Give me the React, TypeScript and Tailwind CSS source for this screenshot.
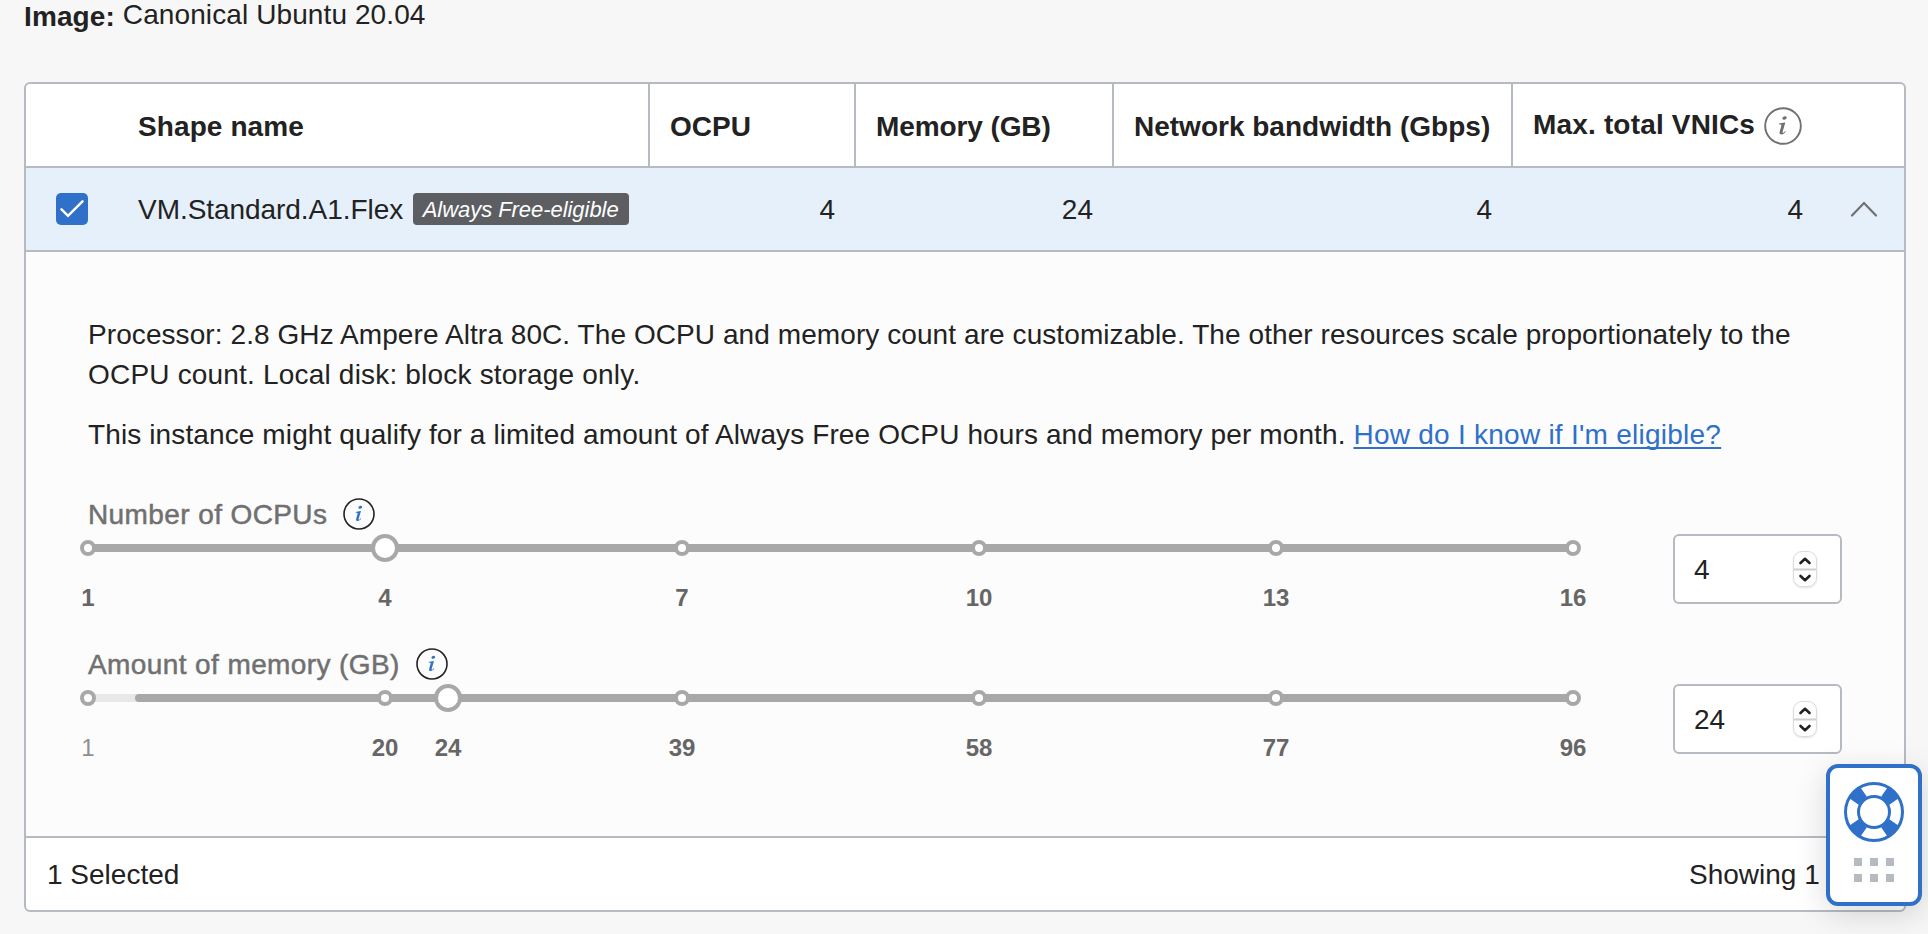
import React from "react";

const FONT = "font-['Liberation_Sans',Arial,sans-serif]";

function InfoIcon({ size, ring, ink }: { size: number; ring: string; ink: string }) {
  return (
    <svg width={size} height={size} viewBox="0 0 32 32" fill="none" className="block shrink-0">
      <circle cx="16" cy="16" r="15" stroke={ring} strokeWidth="1.6" />
      <ellipse cx="17.300" cy="9.300" rx="1.900" ry="1.400" fill={ink} transform="rotate(-20 17.300 9.300)" />
      <path
        d="M12.600 13.900c1.600-.1 3.300-.4 4.900-.8l.4.2-2.200 7.500c-.2.7 0 .9.300.9.500 0 1.200-.7 1.800-1.500l.5.400c-1 1.600-2.300 2.500-3.600 2.500-1.300 0-1.900-.9-1.500-2.300l1.400-5.100c.2-.8 0-1-2-1.200z"
        fill={ink}
      />
    </svg>
  );
}

type Stop = { label: string; at: number; big?: boolean; light?: boolean };

function Slider({ stops, start }: { stops: Stop[]; start: number }) {
  return (
    <div className="mt-[2px] w-[1485px]">
      <div className="relative h-[28px]">
        <div className="absolute inset-x-0 top-[10px] h-[8px] rounded-full bg-[#e8e8e8]" />
        <div className="absolute right-0 top-[10px] h-[8px] rounded-full bg-[#a8a8a8]" style={{ left: `${start}px` }} />
        {stops.map((s) => (
          <span
            key={s.label}
            className={
              s.big
                ? "absolute top-0 size-[28px] -translate-x-1/2 rounded-full border-4 border-[#a8a8a8] bg-white"
                : "absolute top-[6px] size-[16px] -translate-x-1/2 rounded-full border-4 border-[#a8a8a8] bg-white"
            }
            style={{ left: `${s.at}px` }}
          />
        ))}
      </div>
      <div className="relative mt-[21px] h-[30px] text-[24px] leading-[30px]">
        {stops.map((s) => (
          <span
            key={s.label}
            className={
              s.light
                ? "absolute -translate-x-1/2 text-[#8f8f8f]"
                : "absolute -translate-x-1/2 font-bold text-[#666]"
            }
            style={{ left: `${s.at}px` }}
          >
            {s.label}
          </span>
        ))}
      </div>
    </div>
  );
}

function NumberBox({ value }: { value: string }) {
  return (
    <div className="flex h-[70px] w-[169px] items-center justify-between rounded-[6px] border-2 border-[#b6bbc2] bg-white pl-[19px] pr-[23px] text-[28px]">
      <span className="pt-[2px]">{value}</span>
      <span className="-mt-px flex h-[36px] w-[24px] flex-col items-center rounded-[9px] border border-[#dcdcdc] shadow-[0_1px_2px_rgba(0,0,0,0.12)]">
        <svg width="22" height="34" viewBox="0 0 22 34" fill="none">
          <path d="M6.500 11 11 6.800l4.500 4.200" stroke="#222" strokeWidth="2.600" strokeLinecap="round" strokeLinejoin="round" />
          <path d="M0 17.500h22" stroke="#cfcfcf" strokeWidth="2" />
          <path d="M6.500 24 11 28.200l4.500-4.200" stroke="#222" strokeWidth="2.600" strokeLinecap="round" strokeLinejoin="round" />
        </svg>
      </span>
    </div>
  );
}

const ocpuStops: Stop[] = [
  { label: "1", at: 0 },
  { label: "4", at: 297, big: true },
  { label: "7", at: 594 },
  { label: "10", at: 891 },
  { label: "13", at: 1188 },
  { label: "16", at: 1485 },
];

const memoryStops: Stop[] = [
  { label: "1", at: 0, light: true },
  { label: "20", at: 297 },
  { label: "24", at: 360, big: true },
  { label: "39", at: 594 },
  { label: "58", at: 891 },
  { label: "77", at: 1188 },
  { label: "96", at: 1485 },
];

function Field({ label, value, stops, start }: { label: string; value: string; stops: Stop[]; start: number }) {
  return (
    <div className="flex h-[150px]">
      <div className="w-[1585px]">
        <div className="flex h-[36px] items-center gap-[16px]">
          <span className="pt-[2px] text-[28px] leading-[36px] tracking-[0.4px] text-[#707070] [-webkit-text-stroke:0.5px_#707070]">
            {label}
          </span>
          <InfoIcon size={32} ring="#222" ink="#2f70c9" />
        </div>
        <Slider stops={stops} start={start} />
      </div>
      <div className="pt-[38px]">
        <NumberBox value={value} />
      </div>
    </div>
  );
}

const spokes = [45, 135, 225, 315];

export default function App() {
  return (
    <div className={`${FONT} relative h-[934px] w-[1928px] overflow-hidden bg-[#f7f7f7] text-[28px] text-[#222]`}>
      <div className="flex h-[82px] items-start gap-[8px] pl-[24px]">
        <span className="font-bold leading-[33px] tracking-[0.1px]">Image:</span>
        <span className="leading-[29px] tracking-[0.1px]">Canonical Ubuntu 20.04</span>
      </div>

      <div className="ml-[24px] flex h-[830px] w-[1882px] flex-col overflow-hidden rounded-[6px] border-2 border-[#b6bbc2] bg-white">
        <div className="flex h-[84px] shrink-0 border-b-2 border-[#b6bbc2] font-bold">
          <div className="flex w-[624px] items-center border-r-2 border-[#b6bbc2] pl-[112px] pt-[3px] tracking-[0.1px]">
            Shape name
          </div>
          <div className="flex w-[206px] items-center border-r-2 border-[#b6bbc2] pl-[20px] pt-[3px]">OCPU</div>
          <div className="flex w-[258px] items-center border-r-2 border-[#b6bbc2] pl-[20px] pt-[3px] tracking-[-0.1px]">
            Memory (GB)
          </div>
          <div className="flex w-[399px] items-center whitespace-nowrap border-r-2 border-[#b6bbc2] pl-[20px] pt-[3px]">
            Network bandwidth (Gbps)
          </div>
          <div className="flex items-center gap-[9px] whitespace-nowrap pl-[20px] pt-px">
            <span className="-mt-[2px] tracking-[0.17px]">Max. total VNICs</span>
            <InfoIcon size={38} ring="#707070" ink="#707070" />
          </div>
        </div>

        <div className="flex h-[84px] shrink-0 items-center border-b-2 border-[#b6bbc2] bg-[#e6f0fa]">
          <div className="flex w-[112px] pl-[30px]">
            <span className="flex size-[32px] items-center justify-center rounded-[5px] bg-[#2f70c9]">
              <svg width="32" height="32" viewBox="0 0 32 32" fill="none">
                <path d="M5.500 16.300 12 22.800 26.500 8.300" stroke="#fff" strokeWidth="2.500" strokeLinecap="round" />
              </svg>
            </span>
          </div>
          <div className="flex w-[512px] items-center gap-[10px]">
            <span className="pt-[2px] tracking-[-0.05px]">VM.Standard.A1.Flex</span>
            <span className="flex h-[32px] w-[216px] items-center justify-center whitespace-nowrap rounded-[4px] bg-[#5c5e62] pr-px pt-px text-[22px] italic tracking-[-0.05px] text-white">
              Always Free-eligible
            </span>
          </div>
          <div className="w-[206px] pr-[21px] pt-[2px] text-right">4</div>
          <div className="w-[258px] pr-[21px] pt-[2px] text-right">24</div>
          <div className="w-[399px] pr-[21px] pt-[2px] text-right">4</div>
          <div className="w-[312px] pr-[22px] pt-[2px] text-right">4</div>
          <svg width="28" height="18" viewBox="0 0 28 18" fill="none" className="ml-[25px]">
            <path d="M2 15.500 14 3l12 12.500" stroke="#707070" strokeWidth="2.200" strokeLinecap="round" />
          </svg>
        </div>

        <div className="h-[586px] shrink-0 border-b-2 border-[#b6bbc2] bg-[#fcfcfc] pl-[62px] pt-[63px]">
          <p className="whitespace-nowrap leading-[40px]">
            <span className="tracking-[0.08px]">
              Processor: 2.8 GHz Ampere Altra 80C. The OCPU and memory count are customizable. The other resources scale proportionately to the
            </span>
            <br />
            <span className="tracking-[0.19px]">OCPU count. Local disk: block storage only.</span>
          </p>
          <p className="mt-[20px] whitespace-nowrap leading-[40px] tracking-[0.115px]">
            This instance might qualify for a limited amount of Always Free OCPU hours and memory per month.{" "}
            <a className="tracking-[0.25px] text-[#2f70c9] underline decoration-2 underline-offset-[3px] [text-decoration-skip-ink:none]">
              How do I know if I'm eligible?
            </a>
          </p>
          <div className="mt-[41px]">
            <Field label="Number of OCPUs" value="4" stops={ocpuStops} start={0} />
            <Field label="Amount of memory (GB)" value="24" stops={memoryStops} start={47} />
          </div>
        </div>

        <div className="flex flex-1 items-center justify-between pl-[21px] pr-[20px] pt-px">
          <span>1 Selected</span>
          <span className="w-[195px] whitespace-nowrap">Showing 1</span>
        </div>
      </div>

      <div className="absolute left-[1826px] top-[764px] flex h-[142px] w-[96px] flex-col items-center rounded-[12px] border-4 border-[#2f70c9] bg-white pt-[14px] shadow-[0_8px_32px_rgba(0,0,0,0.15)]">
        <svg width="60" height="60" viewBox="0 0 60 60" fill="none">
          <circle cx="30" cy="30" r="28.500" stroke="#2f70c9" strokeWidth="3" />
          {spokes.map((angle) => (
            <path key={angle} d="M46 24.200 57.500 22.200v15.600L46 35.800z" fill="#2f70c9" transform={`rotate(${angle} 30 30)`} />
          ))}
          <circle cx="30" cy="30" r="15.500" fill="#fff" stroke="#2f70c9" strokeWidth="3" />
        </svg>
        <div className="mt-[16px] grid grid-cols-3 gap-[8px]">
          {[0, 1, 2, 3, 4, 5].map((n) => (
            <span key={n} className="size-[8px] bg-[#b6bbc2]" />
          ))}
        </div>
      </div>
    </div>
  );
}
